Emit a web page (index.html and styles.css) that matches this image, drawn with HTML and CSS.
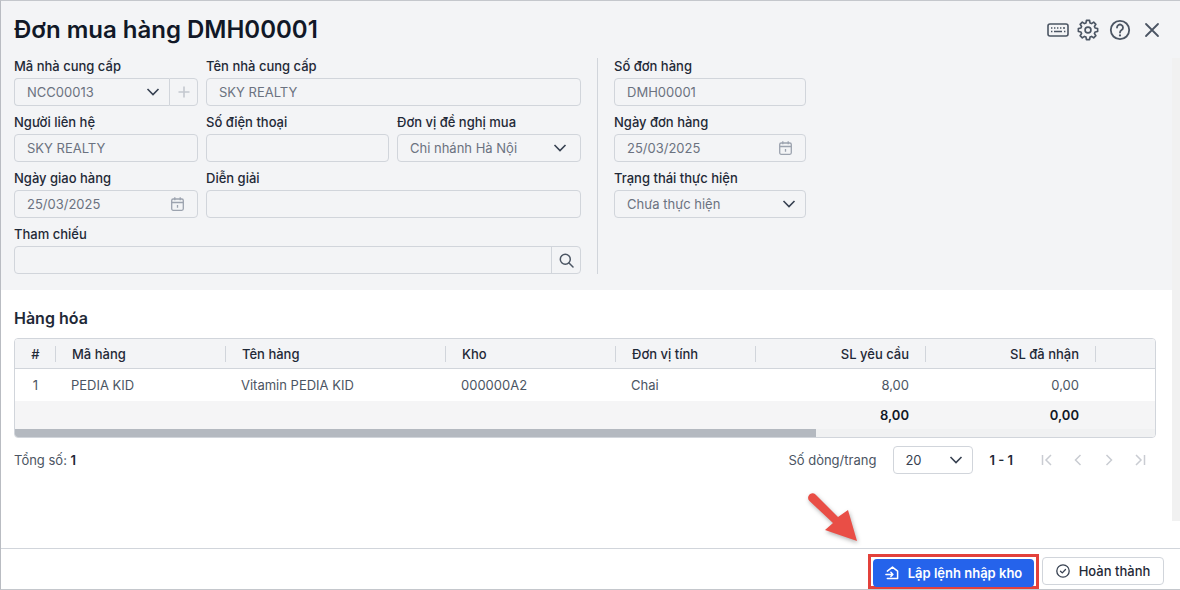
FILE: index.html
```html
<!DOCTYPE html>
<html lang="vi">
<head>
<meta charset="utf-8">
<title>Đơn mua hàng DMH00001</title>
<link rel="stylesheet" href="styles.css">
</head>
<body>
<div class="window">
  <div class="top">
    <header class="head">
      <h1>Đơn mua hàng DMH00001</h1>
      <div class="head-icons">
        <svg class="ic-kb" width="22" height="14" viewBox="0 0 22 14" fill="none" stroke="#4b5563" stroke-width="1.6"><rect x="1" y="1" width="20" height="12" rx="2"/><path d="M4 5h1.4M7 5h1.4M10 5h1.4M13 5h1.4M16 5h2M4 8.5h1.4M7 8.5h8M17 8.5h1.4" stroke-width="1.5"/></svg>
        <svg width="22" height="22" viewBox="0 0 24 24" fill="none" stroke="#4b5563" stroke-width="1.8" stroke-linejoin="round"><path d="M10.300 1.500h3.400l.5 2.800 1.700.7 2.300-1.600 2.400 2.400-1.600 2.300.7 1.700 2.800.5v3.400l-2.800.5-.7 1.700 1.600 2.300-2.400 2.400-2.300-1.600-1.700.7-.5 2.800h-3.400l-.5-2.800-1.700-.7-2.300 1.600-2.400-2.400 1.600-2.300-.7-1.700-2.800-.5v-3.400l2.800-.5.7-1.700-1.600-2.300 2.400-2.400 2.300 1.600 1.700-.7z"/><circle cx="12" cy="12" r="3.200"/></svg>
        <svg width="22" height="22" viewBox="0 0 22 22" fill="none" stroke="#4b5563" stroke-width="1.8" stroke-linecap="round"><circle cx="11" cy="11" r="9.200"/><path d="M8 8.600a3 3 0 1 1 4.600 2.500c-1 .7-1.600 1.200-1.600 2.400"/><path d="M11 16.400v.1" stroke-width="2.200"/></svg>
        <svg class="ic-x" width="16" height="16" viewBox="0 0 16 16" fill="none" stroke="#4b5563" stroke-width="1.800" stroke-linecap="round"><path d="M2 2l12 12M14 2L2 14"/></svg>
      </div>
    </header>
    <div class="form">
      <div class="form-main">
        <div class="field">
          <label class="lbl">Mã nhà cung cấp</label>
          <div class="combo">
            <div class="box val grow">NCC00013<svg class="chev" width="14" height="8" viewBox="0 0 14 8" fill="none" stroke="#374151" stroke-width="1.600"><path d="M1.500 1l5.500 5.500L12.500 1"/></svg></div>
            <div class="plus"><svg width="12" height="12" viewBox="0 0 12 12" fill="none" stroke="#c4c8cf" stroke-width="1.600"><path d="M6 .5v11M.5 6h11"/></svg></div>
          </div>
        </div>
        <div class="field span2">
          <label class="lbl">Tên nhà cung cấp</label>
          <div class="box val">SKY REALTY</div>
        </div>
        <div class="field">
          <label class="lbl">Người liên hệ</label>
          <div class="box val">SKY REALTY</div>
        </div>
        <div class="field">
          <label class="lbl">Số điện thoại</label>
          <div class="box val"></div>
        </div>
        <div class="field">
          <label class="lbl">Đơn vị đề nghị mua</label>
          <div class="box val val-wide">Chi nhánh Hà Nội<svg class="chev" width="14" height="8" viewBox="0 0 14 8" fill="none" stroke="#374151" stroke-width="1.600"><path d="M1.500 1l5.500 5.500L12.500 1"/></svg></div>
        </div>
        <div class="field">
          <label class="lbl">Ngày giao hàng</label>
          <div class="box val">25/03/2025<svg class="cal" width="13" height="14" viewBox="0 0 13 14" fill="none" stroke="#9ca3af" stroke-width="1.300"><rect x=".7" y="2" width="11.600" height="11.300" rx="1.500"/><path d="M.7 5.500h11.600M3.800 .3v3M9.200 .3v3M6.500 8v2.800"/></svg></div>
        </div>
        <div class="field span2">
          <label class="lbl">Diễn giải</label>
          <div class="box val"></div>
        </div>
        <div class="field span3">
          <label class="lbl">Tham chiếu</label>
          <div class="box search"><span class="search-btn"><svg width="15" height="15" viewBox="0 0 15 15" fill="none" stroke="#4b5563" stroke-width="1.500" stroke-linecap="round"><circle cx="6.300" cy="6.300" r="5"/><path d="M10 10l4 4"/></svg></span></div>
        </div>
      </div>
      <div class="form-side">
        <div class="field">
          <label class="lbl">Số đơn hàng</label>
          <div class="box val">DMH00001</div>
        </div>
        <div class="field">
          <label class="lbl">Ngày đơn hàng</label>
          <div class="box val">25/03/2025<svg class="cal" width="13" height="14" viewBox="0 0 13 14" fill="none" stroke="#9ca3af" stroke-width="1.300"><rect x=".7" y="2" width="11.600" height="11.300" rx="1.500"/><path d="M.7 5.500h11.600M3.800 .3v3M9.200 .3v3M6.500 8v2.800"/></svg></div>
        </div>
        <div class="field">
          <label class="lbl">Trạng thái thực hiện</label>
          <div class="box val">Chưa thực hiện<svg class="chev" width="14" height="8" viewBox="0 0 14 8" fill="none" stroke="#374151" stroke-width="1.600"><path d="M1.500 1l5.500 5.500L12.500 1"/></svg></div>
        </div>
      </div>
    </div>
  </div>

  <main class="content">
    <h2>Hàng hóa</h2>
    <div class="table">
      <div class="row thead">
        <div class="c ctr sep">#</div>
        <div class="c sep">Mã hàng</div>
        <div class="c sep">Tên hàng</div>
        <div class="c sep">Kho</div>
        <div class="c sep">Đơn vị tính</div>
        <div class="c num sep">SL yêu cầu</div>
        <div class="c num sep">SL đã nhận</div>
        <div class="c"></div>
      </div>
      <div class="row tbody">
        <div class="c ctr">1</div>
        <div class="c">PEDIA KID</div>
        <div class="c">Vitamin PEDIA KID</div>
        <div class="c">000000A2</div>
        <div class="c">Chai</div>
        <div class="c num">8,00</div>
        <div class="c num">0,00</div>
        <div class="c"></div>
      </div>
      <div class="row tfoot">
        <div class="c"></div>
        <div class="c"></div>
        <div class="c"></div>
        <div class="c"></div>
        <div class="c"></div>
        <div class="c num">8,00</div>
        <div class="c num">0,00</div>
        <div class="c"></div>
      </div>
      <div class="hscroll"><div class="thumb"></div></div>
    </div>
    <div class="pager">
      <div class="total">Tổng số: <b>1</b></div>
      <div class="pager-right">
        <span class="rows-lbl">Số dòng/trang</span>
        <div class="page-size">20<svg width="14" height="8" viewBox="0 0 14 8" fill="none" stroke="#374151" stroke-width="1.600"><path d="M1.500 1l5.500 5.500L12.500 1"/></svg></div>
        <b class="range">1 - 1</b>
        <div class="nav">
          <svg width="12" height="12" viewBox="0 0 12 12" fill="none" stroke="#c9ccd2" stroke-width="1.500"><path d="M1.500 1v10M10 1L5 6l5 5"/></svg>
          <svg width="12" height="12" viewBox="0 0 12 12" fill="none" stroke="#c9ccd2" stroke-width="1.500"><path d="M8.500 1l-5 5 5 5"/></svg>
          <svg width="12" height="12" viewBox="0 0 12 12" fill="none" stroke="#c9ccd2" stroke-width="1.500"><path d="M3.500 1l5 5-5 5"/></svg>
          <svg width="12" height="12" viewBox="0 0 12 12" fill="none" stroke="#c9ccd2" stroke-width="1.500"><path d="M10.500 1v10M2 1l5 5-5 5"/></svg>
        </div>
      </div>
    </div>
  </main>

  <footer class="foot">
    <div class="highlight">
      <button class="btn primary"><svg width="14" height="14" viewBox="0 0 15 15" fill="none" stroke="#fff" stroke-width="1.600" stroke-linecap="round" stroke-linejoin="round"><path d="M2.500 5.500L8 1.200 13.500 5.500V13.500H2.500M1 9h7.500M6.300 6.700L8.500 9l-2.200 2.300"/></svg>Lập lệnh nhập kho</button>
    </div>
    <button class="btn ghost"><svg width="14" height="14" viewBox="0 0 14 14" fill="none" stroke="#374151" stroke-width="1.300" stroke-linecap="round" stroke-linejoin="round"><circle cx="7" cy="7" r="6.200"/><path d="M4.500 7.200l1.800 1.700 3.200-3.400"/></svg>Hoàn thành</button>
  </footer>

  <div class="vscroll"></div>
  <svg class="arrow" width="56" height="56" viewBox="0 0 56 56"><path d="M8.500 3.500L31 26 41 19 50 50 18 39 26 32 2.500 10a4.300 4.300 0 0 1 6-6.500z" fill="#e94e46"/></svg>
</div>
</body>
</html>
```

FILE: styles.css
```css
* { box-sizing: border-box; }
html, body { margin: 0; height: 100%; }
body {
  font-family: Inter, "Noto Sans", sans-serif;
  font-size: 13px;
  color: #111827;
  background: #fff;
  overflow: hidden;
}
.window {
  position: relative;
  width: 1180px;
  height: 590px;
  display: flex;
  flex-direction: column;
  border-top: 1px solid #c4c7cc;
  border-left: 1px solid #b9bcc2;
  border-bottom: 1px solid #c4c7cc;
  background: #fff;
}
.top {
  height: 289px;
  flex: none;
  background: #f3f4f6;
}
.head {
  height: 56px;
  display: flex;
  align-items: center;
  justify-content: space-between;
  padding: 2px 20px 0 13px;
}
.head h1 {
  margin: 0;
  font-size: 24px;
  font-weight: 600;
  line-height: 30px;
  color: #111827;
}
.head-icons {
  display: flex;
  align-items: center;
  gap: 10px;
}
.ic-kb { margin-right: -2px; }
.ic-x { margin-left: 3px; }
.form {
  display: flex;
  padding-left: 13px;
}
.form-main {
  width: 567px;
  display: grid;
  grid-template-columns: 184px 183px 184px;
  column-gap: 8px;
  row-gap: 7px;
}
.form-side {
  width: 192px;
  margin-left: 33px;
  display: flex;
  flex-direction: column;
  gap: 7px;
  position: relative;
}
.form-side::before {
  content: "";
  position: absolute;
  left: -17px;
  top: 1px;
  height: 216px;
  width: 1px;
  background: #d1d5db;
}
.field { display: flex; flex-direction: column; min-width: 0; }
.span2 { grid-column: span 2; }
.span3 { grid-column: span 3; }
.lbl {
  height: 21px;
  font-size: 13px;
  font-weight: 500;
  line-height: 19px;
  color: #1f2937;
}
.box {
  height: 28px;
  border: 1px solid #d1d5db;
  border-radius: 4px;
  background: #f3f4f6;
  display: flex;
  align-items: center;
  justify-content: space-between;
}
.val {
  padding: 0 9px 0 12px;
  font-size: 13px;
  color: #6b7280;
}
.val-wide { padding-right: 13px; }
.combo { display: flex; height: 28px; }
.grow {
  flex: 1;
  border-radius: 4px 0 0 4px;
  border-right: 0;
}
.plus {
  width: 29px;
  border: 1px solid #d1d5db;
  border-radius: 0 4px 4px 0;
  display: flex;
  align-items: center;
  justify-content: center;
}
.cal { margin-right: 4px; }
.search { justify-content: flex-end; }
.search-btn {
  width: 29px;
  height: 26px;
  border-left: 1px solid #d1d5db;
  display: flex;
  align-items: center;
  justify-content: center;
}
.content {
  flex: 1;
  padding: 0 23px 0 13px;
}
.content h2 {
  margin: 18px 0 9px;
  font-size: 16px;
  font-weight: 600;
  line-height: 21px;
  color: #1f2937;
}
.table {
  width: 1142px;
  border: 1px solid #d1d5db;
  border-radius: 4px;
  overflow: hidden;
}
.row {
  display: grid;
  grid-template-columns: 41px 170px 220px 170px 140px 170px 170px 1fr;
}
.thead {
  height: 30px;
  background: #f3f4f6;
  border-bottom: 1px solid #d1d5db;
  font-weight: 500;
  color: #1f2937;
}
.tbody { height: 32px; color: #4b5563; }
.tfoot { height: 28px; background: #f5f5f6; font-weight: 600; color: #111827; }
.c {
  position: relative;
  display: flex;
  align-items: center;
  padding: 0 17px 0 15px;
  white-space: nowrap;
}
.thead .c { padding-left: 16px; }
.thead .ctr, .ctr { padding: 0; justify-content: center; }
.num { justify-content: flex-end; }
.sep::after {
  content: "";
  position: absolute;
  right: 0;
  top: 7px;
  height: 16px;
  width: 1px;
  background: #d1d5db;
}
.hscroll {
  height: 8px;
  background: #f0f1f2;
}
.thumb {
  width: 801px;
  height: 8px;
  background: #b4b9c0;
}
.pager {
  display: flex;
  align-items: center;
  justify-content: space-between;
  height: 28px;
  margin-top: 8px;
  color: #4b5563;
}
.total b { color: #1f2937; font-weight: 600; }
.pager-right {
  display: flex;
  align-items: center;
}
.rows-lbl { margin-right: 17px; }
.page-size {
  width: 80px;
  height: 28px;
  border: 1px solid #d1d5db;
  border-radius: 4px;
  display: flex;
  align-items: center;
  justify-content: space-between;
  padding: 0 9px 0 11px;
  color: #374151;
  margin-right: 16px;
}
.range { color: #1f2937; font-weight: 600; margin-right: 28px; }
.nav {
  display: flex;
  align-items: center;
  gap: 19px;
  margin-right: 11px;
}
.foot {
  height: 41px;
  flex: none;
  border-top: 1px solid #d1d5db;
  display: flex;
  align-items: flex-start;
  justify-content: flex-end;
  padding: 5px 16px 0 0;
  gap: 3px;
}
.highlight {
  border: 3px solid #e3413b;
  padding: 2px;
  display: flex;
  height: 35px;
}
.btn {
  font-family: inherit;
  font-size: 13px;
  font-weight: 500;
  height: 28px;
  border-radius: 4px;
  display: flex;
  align-items: center;
  justify-content: center;
  gap: 9px;
  cursor: pointer;
  padding: 0;
}
.primary {
  width: 161px;
  background: #2563eb;
  border: 0;
  color: #fff;
  font-weight: 600;
}
.ghost {
  width: 122px;
  margin-top: 3px;
  background: #fff;
  border: 1px solid #d1d5db;
  color: #1f2937;
}
.vscroll {
  position: absolute;
  right: 0;
  top: 57px;
  width: 8px;
  height: 463px;
  background: #f1f1f1;
}
.arrow {
  position: absolute;
  left: 806px;
  top: 490px;
  filter: drop-shadow(1px 2px 2px rgba(0,0,0,.3));
}
```
